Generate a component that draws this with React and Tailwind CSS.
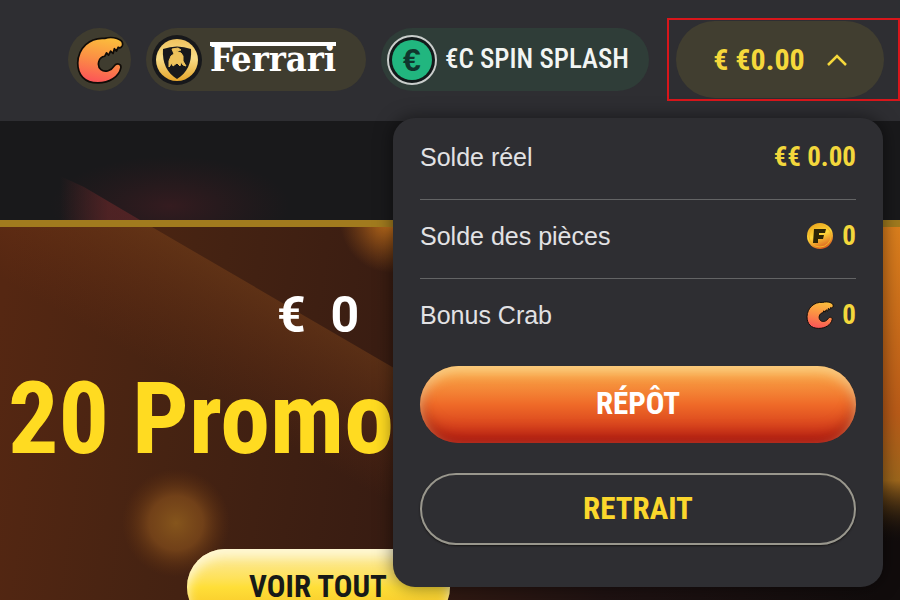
import React from "react";

const display = "font-['Roboto_Condensed','Roboto',sans-serif] font-bold";

function ClawIcon({ className, id }) {
  return (
    <svg viewBox="12 17 140 140" className={className} aria-hidden="true">
      <defs>
        <linearGradient id={id} x1="0.6" y1="0" x2="0.4" y2="1">
          <stop offset="0" stopColor="#fbbd3c" />
          <stop offset="0.5" stopColor="#fb8d45" />
          <stop offset="1" stopColor="#fc5358" />
        </linearGradient>
      </defs>
      <path
        d="M17 96C18 52 52 20 96 24C120 17 149 26 148 41C148 49 141 54 135 50L130 61L124 54L120 68L113 61L107 73L101 66L96 76C78 78 71 103 85 115C97 125 116 117 123 105C129 95 144 97 143 109C138 136 108 154 76 154C36 154 17 130 17 96Z"
        fill={`url(#${id})`}
        stroke="#100c08"
        strokeWidth="5"
        strokeLinejoin="round"
      />
    </svg>
  );
}

function BullBadge() {
  return (
    <svg viewBox="0 0 50 50" className="size-[50px] shrink-0" aria-hidden="true">
      <defs>
        <linearGradient id="badge" x1="0" y1="0" x2="0" y2="1">
          <stop offset="0" stopColor="#efc35e" />
          <stop offset="0.45" stopColor="#f8dd88" />
          <stop offset="1" stopColor="#e5a52b" />
        </linearGradient>
      </defs>
      <circle cx="25" cy="25" r="25" fill="#17181b" />
      <circle cx="25" cy="25" r="21" fill="url(#badge)" />
      <path d="M11 14Q25 9 39 14C40 28 35 38 25 44C15 38 10 28 11 14Z" fill="#17181b" />
      <path
        d="M20 14L26 13L29 15L24 16L29 18L31 21L31 26L34 31L31 30L29 27L28 31L25 28L21 31L20 28L17 32L17 26L19 21L22 19Z"
        fill="#edc25b"
        stroke="#edc25b"
        strokeWidth="1"
      />
    </svg>
  );
}

function CoinIcon() {
  return (
    <svg viewBox="0 0 28 28" className="size-7" aria-hidden="true">
      <defs>
        <linearGradient id="coin" x1="0.3" y1="0" x2="0.7" y2="1">
          <stop offset="0" stopColor="#e9a31c" />
          <stop offset="0.45" stopColor="#ffd83a" />
          <stop offset="1" stopColor="#d9521c" />
        </linearGradient>
      </defs>
      <circle cx="14" cy="14" r="13" fill="url(#coin)" />
      <circle cx="14" cy="14" r="11" fill="none" stroke="#f2b527" strokeWidth="1" />
      <path d="M8 7H20L19 11H13V13H18L17 17H12V21H7Z" fill="#2d2506" />
    </svg>
  );
}

function BalanceRow({ label, divider, children }) {
  return (
    <div
      className={`flex items-center justify-between pt-5 pb-[26px] ${divider ? "border-b border-[#636465]" : ""}`}
    >
      <dt className="font-['Liberation_Sans',Arial,sans-serif] text-[25px] leading-8 text-[#e2e2e4]">{label}</dt>
      <dd className={`${display} flex items-center gap-2 text-[27px] leading-8 text-[#f3d73c]`}>{children}</dd>
    </div>
  );
}

function BalanceMenu() {
  return (
    <section
      aria-label="Solde"
      className="absolute top-[118px] right-[17px] z-10 w-[490px] rounded-[22px] bg-[#2e2e32] px-[27px] pt-[3px] pb-[42px] shadow-[0_0_18px_rgba(0,0,0,0.5)]"
    >
      <dl>
        <BalanceRow label="Solde réel" divider>€€ 0.00</BalanceRow>
        <BalanceRow label="Solde des pièces" divider>
          <CoinIcon />0
        </BalanceRow>
        <BalanceRow label="Bonus Crab">
          <ClawIcon className="size-7" id="clawSmall" />0
        </BalanceRow>
      </dl>
      <div className="mt-[9px] flex flex-col gap-[30px]">
        <button
          type="button"
          className={`${display} h-[77px] w-full rounded-full bg-linear-to-b from-[#f9b04c] via-[#ef6a28] to-[#c81c15] text-[31px] text-white shadow-[inset_0_6px_12px_rgba(255,225,160,0.7),inset_0_-8px_14px_rgba(130,20,10,0.5)]`}
        >
          RÉPÔT
        </button>
        <button
          type="button"
          className={`${display} h-[72px] w-full rounded-full border-2 border-[#99978d] text-[31px] text-[#fbd72c] shadow-[0_1px_2px_#151313]`}
        >
          RETRAIT
        </button>
      </div>
    </section>
  );
}

function Header() {
  return (
    <header className="flex items-center justify-end bg-[#2e2e32] pt-[18px] pb-5">
      <div className="mr-[18px] flex gap-[15px]">
        <button type="button" aria-label="Crab" className="flex size-[63px] items-center justify-center rounded-full bg-[#3f3c2f]">
          <ClawIcon className="size-[48px]" id="clawLarge" />
        </button>
        <button type="button" className="flex h-[63px] w-[220px] items-center gap-2 rounded-full bg-[#3f3c2f] pl-1.5">
          <BullBadge />
          <span className="relative pb-1 font-['DejaVu_Serif_Condensed','DejaVu_Serif',serif] text-[36px] leading-9 font-bold text-white">
            Ferrari
            <span className="absolute top-0.5 right-0 left-0 h-1 bg-white" />
          </span>
        </button>
        <button type="button" className="flex h-[63px] w-[268px] items-center gap-2 rounded-full bg-[#2f3d38] pl-1.5">
          <span className="flex size-[50px] shrink-0 items-center justify-center rounded-full border-2 border-[#c9cdcb] bg-[#12191a] p-[3px]">
            <span className="flex size-full items-center justify-center rounded-full bg-[#21b67f] font-['Liberation_Sans',sans-serif] text-[32px] leading-none font-bold text-[#10352d]">
              €
            </span>
          </span>
          <span className="font-['Roboto_Condensed','Roboto',sans-serif] text-[27px] font-medium whitespace-nowrap text-[#f2f5f3]">€C SPIN SPLASH</span>
        </button>
      </div>
      <div className="w-[233px] border-2 border-[#d8161b] py-px pl-[7px]">
        <button
          type="button"
          aria-expanded="true"
          className={`${display} flex h-[77px] w-[208px] items-center justify-center gap-[22px] rounded-full bg-[#413e30] text-[30px] text-[#f5d83b]`}
        >
          € €0.00
          <svg viewBox="0 0 20 12" className="h-3 w-5" fill="none" stroke="currentColor" strokeWidth="2.5" aria-hidden="true">
            <path d="M1 11L10 2L19 11" />
          </svg>
        </button>
      </div>
    </header>
  );
}

function Scenery() {
  return (
    <svg viewBox="0 0 900 479" preserveAspectRatio="xMinYMin slice" className="absolute inset-0 size-full" aria-hidden="true">
      <defs>
        <linearGradient id="ground" gradientUnits="userSpaceOnUse" x1="0" y1="200" x2="900" y2="330">
          <stop offset="0" stopColor="#552712" />
          <stop offset="0.2" stopColor="#462312" />
          <stop offset="0.45" stopColor="#381c12" />
          <stop offset="0.7" stopColor="#1f1212" />
          <stop offset="1" stopColor="#110c0c" />
        </linearGradient>
        <radialGradient id="glow">
          <stop offset="0" stopColor="#85551c" />
          <stop offset="0.5" stopColor="#7c481a" stopOpacity="0.8" />
          <stop offset="1" stopColor="#60300f" stopOpacity="0" />
        </radialGradient>
        <radialGradient id="ember">
          <stop offset="0" stopColor="#5d1f26" stopOpacity="0.4" />
          <stop offset="1" stopColor="#481a20" stopOpacity="0" />
        </radialGradient>
        <radialGradient id="amber">
          <stop offset="0" stopColor="#d17a1d" />
          <stop offset="1" stopColor="#a75a17" stopOpacity="0" />
        </radialGradient>
        <linearGradient id="edge" x1="0" y1="0" x2="0" y2="1">
          <stop offset="0" stopColor="#db7f1d" />
          <stop offset="0.5" stopColor="#b95b18" />
          <stop offset="0.68" stopColor="#9c661c" />
          <stop offset="0.85" stopColor="#110c0c" stopOpacity="0" />
        </linearGradient>
        <linearGradient id="beam" gradientUnits="userSpaceOnUse" x1="240" y1="157" x2="180" y2="261">
          <stop offset="0" stopColor="#80451a" stopOpacity="0.45" />
          <stop offset="1" stopColor="#7c3514" stopOpacity="0" />
        </linearGradient>
        <linearGradient id="tip" x1="0" y1="0" x2="1" y2="0">
          <stop offset="0" stopColor="#6a2829" stopOpacity="0" />
          <stop offset="0.6" stopColor="#6a2829" stopOpacity="0.6" />
          <stop offset="1" stopColor="#6a2829" stopOpacity="0.6" />
        </linearGradient>
        <clipPath id="belowStrip">
          <rect y="106" width="900" height="373" />
        </clipPath>
      </defs>
      <rect width="900" height="479" fill="#19191b" />
      <ellipse cx="170" cy="85" rx="120" ry="50" fill="url(#ember)" />
      <path d="M60 55L84 66L140 99L60 99Z" fill="url(#tip)" />
      <rect y="106" width="900" height="373" fill="url(#ground)" />
      <path d="M152 106L430 268L430 479L0 479L0 106Z" fill="url(#beam)" />
      <circle cx="176" cy="402" r="54" fill="url(#glow)" />
      <circle cx="392" cy="100" r="52" fill="url(#amber)" clipPath="url(#belowStrip)" />
      <rect x="870" y="106" width="30" height="373" fill="url(#edge)" />
      <rect y="99" width="900" height="7" fill="#a17b1e" />
    </svg>
  );
}

function Hero() {
  return (
    <main className="relative min-h-[479px] flex-1 overflow-hidden bg-[#19191b]">
      <Scenery />
      <div className="relative flex w-[636px] flex-col items-center pt-[166px]">
        <p className="font-['Roboto',sans-serif] text-[50px] leading-[56px] font-bold whitespace-pre text-white">€  0</p>
        <h1 className={`${display} mt-6 self-start pl-2 text-[100px] leading-[104px] whitespace-nowrap text-[#ffdb21]`}>
          20 Promo
        </h1>
        <button
          type="button"
          className={`${display} mt-[78px] h-[76px] w-[263px] rounded-full bg-linear-to-b from-[#fbeaa0] via-[#ffdf38] to-[#f2b91d] text-[31px] text-[#171a18] shadow-[inset_0_8px_12px_rgba(255,250,220,0.9)]`}
        >
          VOIR TOUT
        </button>
      </div>
    </main>
  );
}

export default function App() {
  return (
    <div className="relative flex h-screen flex-col overflow-hidden bg-[#19191b]">
      <Header />
      <Hero />
      <BalanceMenu />
    </div>
  );
}
